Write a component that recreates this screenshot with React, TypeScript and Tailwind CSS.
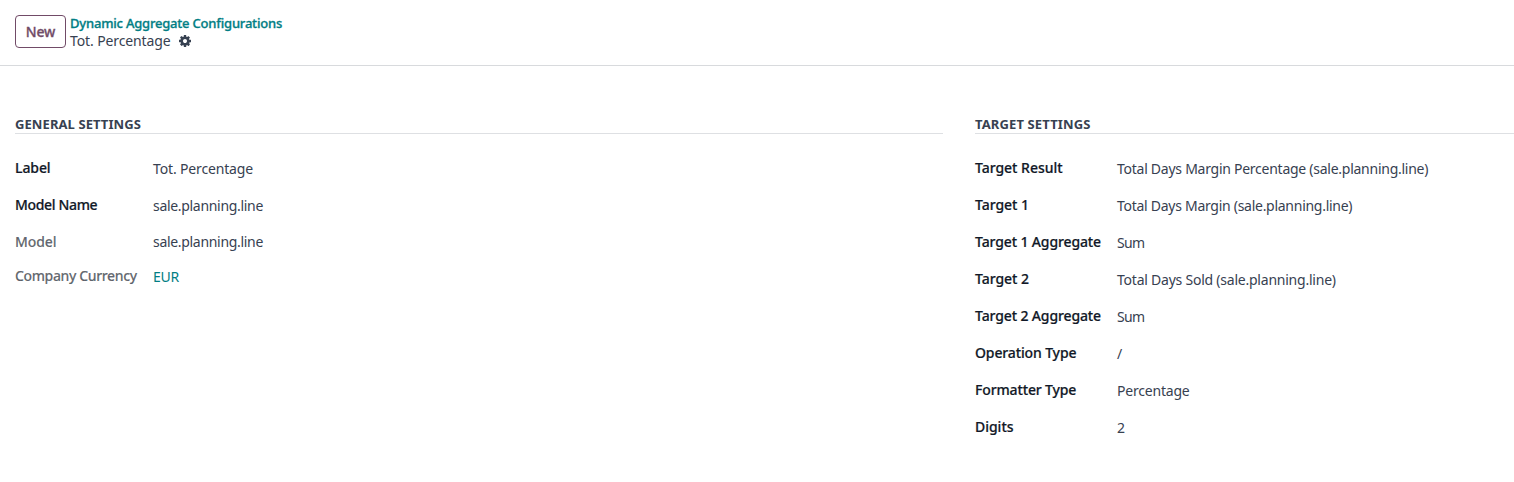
import type { ReactNode } from 'react';

type Field = {
  label: string;
  labelClass: string;
  value: string;
  valueClass: string;
  rowClass?: string;
};

const general: Field[] = [
  { label: 'Label', labelClass: 'text-[#111827] tracking-[-0.096px]', value: 'Tot. Percentage', valueClass: 'text-[#374151] tracking-[-0.15px] pt-px' },
  { label: 'Model Name', labelClass: 'text-[#111827] tracking-[-0.34px]', value: 'sale.planning.line', valueClass: 'text-[#374151] tracking-[-0.31px] pt-px' },
  { label: 'Model', labelClass: 'text-[#111827]/66 tracking-[-0.08px]', value: 'sale.planning.line', valueClass: 'text-[#374151] tracking-[-0.31px]', rowClass: 'h-[34px]' },
  { label: 'Company Currency', labelClass: 'text-[#111827]/66 tracking-[-0.36px]', value: 'EUR', valueClass: 'text-[#017e84] tracking-[-0.2px] pt-px' },
];

const target: Field[] = [
  { label: 'Target Result', labelClass: 'text-[#111827] tracking-[-0.028px]', value: 'Total Days Margin Percentage (sale.planning.line)', valueClass: 'text-[#374151] tracking-[-0.26px] pt-px' },
  { label: 'Target 1', labelClass: 'text-[#111827] tracking-[-0.033px]', value: 'Total Days Margin (sale.planning.line)', valueClass: 'text-[#374151] tracking-[-0.275px] pt-px' },
  { label: 'Target 1 Aggregate', labelClass: 'text-[#111827] tracking-[-0.122px]', value: 'Sum', valueClass: 'text-[#374151] tracking-[-0.7px] pt-px' },
  { label: 'Target 2', labelClass: 'text-[#111827] tracking-[-0.033px]', value: 'Total Days Sold (sale.planning.line)', valueClass: 'text-[#374151] tracking-[-0.229px] pt-px' },
  { label: 'Target 2 Aggregate', labelClass: 'text-[#111827] tracking-[-0.122px]', value: 'Sum', valueClass: 'text-[#374151] tracking-[-0.7px] pt-px' },
  { label: 'Operation Type', labelClass: 'text-[#111827] tracking-[-0.13px]', value: '/', valueClass: 'text-[#374151] pt-px' },
  { label: 'Formatter Type', labelClass: 'text-[#111827] tracking-[-0.14px]', value: 'Percentage', valueClass: 'text-[#374151] tracking-[-0.205px] pt-px' },
  { label: 'Digits', labelClass: 'text-[#111827] tracking-[-0.023px]', value: '2', valueClass: 'text-[#374151] pt-px' },
];

function GearIcon() {
  return (
    <svg className="size-[12px]" viewBox="0 128 1536 1536" fill="currentColor" aria-hidden="true">
      <path d="M1024 896q0-106-75-181t-181-75-181 75-75 181 75 181 181 75 181-75 75-181zm512-109v222q0 12-8 23t-20 13l-185 28q-19 54-39 91 35 50 107 138 10 12 10 25t-9 23q-27 37-99 108t-94 71q-12 0-26-9l-138-108q-44 23-91 38-16 136-29 186-7 28-36 28h-222q-14 0-24.5-8.500t-11.500-21.500l-28-184q-49-16-90-37l-141 107q-10 9-25 9-14 0-25-11-126-114-165-168-7-10-7-23 0-12 8-23 15-21 51-66.500t54-70.500q-27-50-41-99l-183-27q-13-2-21-12.500t-8-23.500v-222q0-12 8-23t19-13l186-28q14-46 39-92-40-57-107-138-10-12-10-24 0-10 9-23 26-36 98.500-107.500t94.500-71.500q13 0 26 10l138 107q44-23 91-38 16-136 29-186 7-28 36-28h222q14 0 24.500 8.500t11.500 21.500l28 184q49 16 90 37l142-107q9-9 24-9 13 0 25 10 129 119 165 170 7 8 7 22 0 12-8 23-15 21-51 66.500t-54 70.500q26 50 41 98l183 28q13 2 21 12.500t8 23.500z" />
    </svg>
  );
}

function Section({ title, className, labelWidth, fields }: { title: ReactNode; className: string; labelWidth: string; fields: Field[] }) {
  return (
    <section className={className}>
      <h2 className="h-[19px] border-b border-[#dee0e3] text-[13px] leading-[19px] font-bold text-[#374151]">{title}</h2>
      <dl className="mt-[15px]">
        {fields.map((f) => (
          <div key={f.label} className={`flex ${f.rowClass ?? 'h-[37px]'}`}>
            <dt className={`shrink-0 leading-[37px] font-medium whitespace-nowrap [-webkit-text-stroke:0.2px] ${labelWidth} ${f.labelClass}`}>{f.label}</dt>
            <dd className={`leading-[37px] whitespace-nowrap ${f.valueClass}`}>{f.value}</dd>
          </div>
        ))}
      </dl>
    </section>
  );
}

export default function App() {
  return (
    <div className="h-[482px] overflow-hidden bg-white font-['Noto_Sans',sans-serif] text-[14px]">
      <header className="flex h-[66px] border-b border-[#d8dadd] pt-[15px] pl-[15px]">
        <button className="h-[33px] w-[51px] rounded-[4px] border border-[#714b67] leading-[31px] font-medium tracking-[-0.139px] text-[#714b67] [-webkit-text-stroke:0.3px]">New</button>
        <div className="ml-[4px]">
          <a className="block h-[17px] text-[13px] leading-[17px] font-medium tracking-[-0.202px] text-[#017e84] [-webkit-text-stroke:0.3px]">Dynamic Aggregate Configurations</a>
          <div className="flex h-[18px] items-center leading-[18px] text-[#374151]">
            <span className="w-[109px] tracking-[-0.118px]">Tot. Percentage</span>
            <GearIcon />
          </div>
        </div>
      </header>
      <main className="flex pt-[49px] pl-[15px]">
        <Section title={<span className="tracking-[0.086px]">GENERAL SETTINGS</span>} className="mr-[32px] w-[928px] shrink-0" labelWidth="w-[138px]" fields={general} />
        <Section title={<span className="tracking-[0.127px]">TARGET SETTINGS</span>} className="grow" labelWidth="w-[142px]" fields={target} />
      </main>
    </div>
  );
}
